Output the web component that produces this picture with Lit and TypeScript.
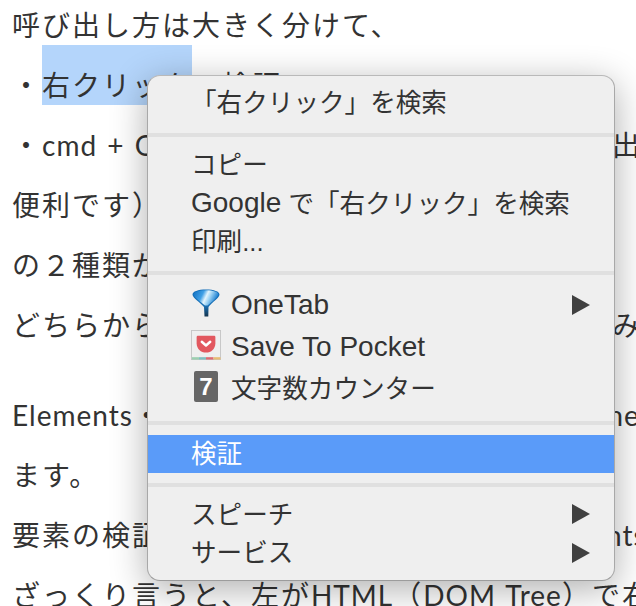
import { LitElement, html, css } from "lit";
import { customElement } from "lit/decorators.js";

const arrow = html`<svg class="arrow" width="18" height="20" viewBox="0 0 18 20"><path d="M0 0L18 10L0 20Z" fill="#404040"/></svg>`;

const funnel = html`<svg width="30" height="30" viewBox="0 0 30 30">
  <defs>
    <linearGradient id="f" x1="0" y1="0" x2="1" y2="0.3">
      <stop offset="0" stop-color="#0f6fc0"/><stop offset="0.4" stop-color="#3f9fe6"/><stop offset="0.58" stop-color="#e4f4fd"/><stop offset="0.72" stop-color="#9fd4f5"/><stop offset="1" stop-color="#1c7fd0"/>
    </linearGradient>
    <linearGradient id="s" x1="0" y1="0" x2="0" y2="1">
      <stop offset="0" stop-color="#0f6cb8"/><stop offset="0.6" stop-color="#1a70b4"/><stop offset="1" stop-color="#15344e"/>
    </linearGradient>
  </defs>
  <path d="M1.5 6.5C1.5 3.5 7 1.5 15 1.5S28.5 3.5 28.5 6.5C28.5 10 21 14 17.5 19L17.3 28.5L13.5 28.5L13 19C9 14 1.5 10 1.5 6.5Z" fill="url(#s)"/>
  <path d="M2.5 6.5C2.5 4 8 2.2 15 2.2S27.5 4 27.5 6.5C26.5 10 20.5 14 16.5 17.5L14 17.5C10 14 3.5 10 2.5 6.5Z" fill="url(#f)"/>
</svg>`;

const pocket = html`<svg width="32" height="32" viewBox="0 0 32 32">
  <rect x="0.5" y="0.5" width="31" height="31" fill="#efefef" stroke="#c6c6c6"/>
  <rect x="1" y="29" width="7.5" height="2.5" fill="#9bd0b0"/>
  <rect x="8.5" y="29" width="7.5" height="2.5" fill="#7fbfc0"/>
  <rect x="16" y="29" width="8" height="2.5" fill="#dd6a72"/>
  <rect x="24" y="29" width="7.5" height="2.5" fill="#e8bd74"/>
  <path d="M6 7.5C6 6.5 6.7 6 7.6 6H24.4C25.3 6 26 6.5 26 7.5V14C26 20 21.5 24 16 24S6 20 6 14Z" fill="#e2585f"/>
  <path d="M11.5 12.5L16 16.5L20.5 12.5" fill="none" stroke="#fff" stroke-width="2.6" stroke-linecap="round" stroke-linejoin="round"/>
</svg>`;

@customElement("app-root")
export class AppRoot extends LitElement {
  static styles = css`
    :host {
      display: block;
      position: relative;
      width: 636px;
      height: 606px;
      overflow: hidden;
      background: #fff;
      font-family: "Lato", "Noto Sans CJK JP", sans-serif;
    }
    .page {
      margin-top: -5px;
      padding-left: 12px;
      color: #333;
      font-size: 28px;
      letter-spacing: 2px;
    }
    .line {
      height: 60px;
      line-height: 60px;
      white-space: nowrap;
    }
    .split {
      display: flex;
      justify-content: space-between;
    }
    .tail {
      flex: none;
      width: 24px;
    }
    .tail-me { width: 36px; }
    .tail-nts { width: 30px; }
    .blank { height: 30px; }
    .la {
      letter-spacing: 1px;
      word-spacing: 2px;
    }
    .sel {
      display: inline-block;
      margin-top: -10px;
      padding-top: 20px;
      line-height: 40px;
      background: #b4d5fb;
    }
    .menu {
      position: absolute;
      left: 147px;
      top: 75px;
      width: 468px;
      height: 506px;
      box-sizing: border-box;
      border: 1px solid #b9b9b9;
      border-left-color: #a8a8a8;
      border-right-color: #a8a8a8;
      border-bottom-color: #9c9c9c;
      border-radius: 13px;
      background: #efefef;
      box-shadow: 0 8px 36px rgba(0, 0, 0, 0.32);
      padding-top: 7px;
      color: #333;
      font-family: "Liberation Sans", "Noto Sans CJK JP", sans-serif;
      font-size: 25.6px;
      overflow: hidden;
    }
    .m {
      font-size: 28px;
      padding-top: 3px;
    }
    .cjk { padding-bottom: 2px; }
    .item {
      display: flex;
      align-items: center;
      box-sizing: border-box;
      height: 38.5px;
      padding: 0 24px 4px 43px;
      white-space: nowrap;
    }
    .tall { height: 42px; }
    .on {
      background: #5a9bf9;
      color: #fff;
      height: 38px;
      padding-bottom: 6px;
    }
    .icon {
      display: flex;
      justify-content: center;
      width: 30px;
      margin-right: 10px;
    }
    .arrow {
      margin-left: auto;
      margin-top: 4px;
    }
    .sep {
      height: 4px;
      background: #e0e0e0;
    }
    .sa { margin: 11px 0 9px; }
    .sb { margin: 10px 0 9px; }
    .sc { margin: 11px 0 10px; }
    .sd { margin: 10px 0 8px; }
    .seven {
      width: 24px;
      height: 31px;
      margin-bottom: 2px;
      border-radius: 2px;
      background: #666;
      color: #fff;
      font: bold 24px/31px "Liberation Sans", sans-serif;
      text-align: center;
    }
  `;

  render() {
    return html`
      <div class="page">
        <div class="line">呼び出し方は大きく分けて、</div>
        <div class="line">・<span class="sel">右クリック</span>→検証</div>
        <div class="line split"><span>・<span class="la">cmd + Option + I</span></span><span class="tail">出</span></div>
        <div class="line">便利です）</div>
        <div class="line">の２種類があります。</div>
        <div class="line split"><span>どちらからでも</span><span class="tail">み</span></div>
        <div class="blank"></div>
        <div class="line split"><span><span class="la">Elements</span>・</span><span class="tail tail-me la">me</span></div>
        <div class="line">ます。</div>
        <div class="line split"><span>要素の検証</span><span class="tail tail-nts la">nts</span></div>
        <div class="line">ざっくり言うと、左が<span class="la">HTML</span>（<span class="la">DOM Tree</span>）で右</div>
      </div>
      <div class="menu">
        <div class="item">「右クリック」を検索</div>
        <div class="sep sa"></div>
        <div class="item">コピー</div>
        <div class="item"><span class="m">Google</span>&nbsp;で「右クリック」を検索</div>
        <div class="item">印刷...</div>
        <div class="sep sb"></div>
        <div class="item tall"><span class="icon">${funnel}</span><span class="m">OneTab</span>${arrow}</div>
        <div class="item tall"><span class="icon">${pocket}</span><span class="m">Save To Pocket</span></div>
        <div class="item tall"><span class="icon"><span class="seven">7</span></span><span class="cjk">文字数カウンター</span></div>
        <div class="sep sc"></div>
        <div class="item on">検証</div>
        <div class="sep sd"></div>
        <div class="item">スピーチ${arrow}</div>
        <div class="item">サービス${arrow}</div>
      </div>
    `;
  }
}
